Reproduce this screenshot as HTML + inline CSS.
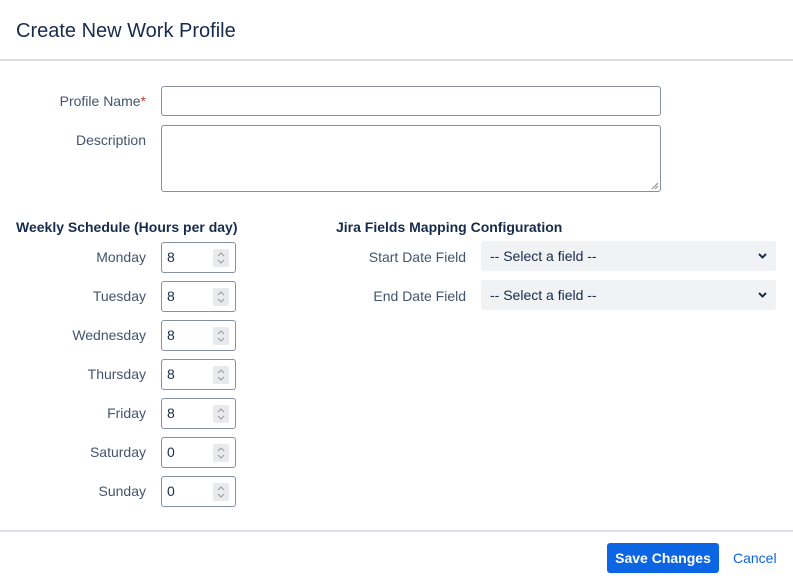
<!DOCTYPE html>
<html><head><style>
*{box-sizing:border-box;margin:0;padding:0}
body{width:793px;height:580px;background:#fff;font-family:"Liberation Sans","DejaVu Sans",sans-serif;color:#44546f;position:relative;overflow:hidden;font-size:14px}
.abs{position:absolute}
h1{position:absolute;left:16px;top:20px;font-size:20px;font-weight:normal;color:#172b4d}
.hr{position:absolute;left:0;width:793px;height:2px;background:#dcdfe4}
.lbl{position:absolute;text-align:right;font-size:14px;color:#44546f}
.inp{position:absolute;border:1px solid #8590a2;border-radius:3px;background:#fff}
.num{position:absolute;left:161px;width:75px;height:31px;border:1px solid #8590a2;border-radius:3px;font-size:14px;color:#172b4d;padding:6px 0 0 5px}
.spin{position:absolute;right:6px;top:6px;width:16px;height:18px;background:#e9eaee;border-radius:2px}
.sel{position:absolute;left:481px;width:295px;height:30px;background:#f1f2f4;border-radius:3px;font-size:14px;color:#172b4d;padding:7px 0 0 9px}
h3{position:absolute;font-size:14px;font-weight:bold;color:#172b4d}
</style></head><body>
<h1>Create New Work Profile</h1>
<div class="hr" style="top:59px"></div>
<div class="lbl" style="left:0;width:146px;top:93px">Profile Name<span style="color:#c9372c">*</span></div>
<div class="inp" style="left:161px;top:86px;width:500px;height:30px"></div>
<div class="lbl" style="left:0;width:146px;top:132px">Description</div>
<div class="inp" style="left:161px;top:125px;width:500px;height:67px"><svg class="abs" style="right:1px;bottom:1px" width="9" height="9"><path d="M8 2L2 8M8 5L5 8" stroke="#888" stroke-width="1"/></svg></div>
<h3 style="left:16px;top:219px">Weekly Schedule (Hours per day)</h3>
<h3 style="left:336px;top:219px">Jira Fields Mapping Configuration</h3>

<div class="lbl" style="left:0;width:146px;top:249px">Monday</div>
<div class="num" style="top:242px">8<div class="spin"><svg width="16" height="18"><path d="M5 7l3-3 3 3M5 11l3 3 3-3" fill="none" stroke="#999" stroke-width="1"/></svg></div></div>
<div class="lbl" style="left:0;width:146px;top:288px">Tuesday</div>
<div class="num" style="top:281px">8<div class="spin"><svg width="16" height="18"><path d="M5 7l3-3 3 3M5 11l3 3 3-3" fill="none" stroke="#999" stroke-width="1"/></svg></div></div>
<div class="lbl" style="left:0;width:146px;top:327px">Wednesday</div>
<div class="num" style="top:320px">8<div class="spin"><svg width="16" height="18"><path d="M5 7l3-3 3 3M5 11l3 3 3-3" fill="none" stroke="#999" stroke-width="1"/></svg></div></div>
<div class="lbl" style="left:0;width:146px;top:366px">Thursday</div>
<div class="num" style="top:359px">8<div class="spin"><svg width="16" height="18"><path d="M5 7l3-3 3 3M5 11l3 3 3-3" fill="none" stroke="#999" stroke-width="1"/></svg></div></div>
<div class="lbl" style="left:0;width:146px;top:405px">Friday</div>
<div class="num" style="top:398px">8<div class="spin"><svg width="16" height="18"><path d="M5 7l3-3 3 3M5 11l3 3 3-3" fill="none" stroke="#999" stroke-width="1"/></svg></div></div>
<div class="lbl" style="left:0;width:146px;top:444px">Saturday</div>
<div class="num" style="top:437px">0<div class="spin"><svg width="16" height="18"><path d="M5 7l3-3 3 3M5 11l3 3 3-3" fill="none" stroke="#999" stroke-width="1"/></svg></div></div>
<div class="lbl" style="left:0;width:146px;top:483px">Sunday</div>
<div class="num" style="top:476px">0<div class="spin"><svg width="16" height="18"><path d="M5 7l3-3 3 3M5 11l3 3 3-3" fill="none" stroke="#999" stroke-width="1"/></svg></div></div>

<div class="lbl" style="left:300px;width:166px;top:249px">Start Date Field</div>
<div class="sel" style="top:241px">-- Select a field --<svg class="abs" style="right:9px;top:12px" width="9" height="6"><path d="M1 1l3.5 3.5L8 1" fill="none" stroke="#172b4d" stroke-width="2"/></svg></div>
<div class="lbl" style="left:300px;width:166px;top:288px">End Date Field</div>
<div class="sel" style="top:280px">-- Select a field --<svg class="abs" style="right:9px;top:12px" width="9" height="6"><path d="M1 1l3.5 3.5L8 1" fill="none" stroke="#172b4d" stroke-width="2"/></svg></div>

<div class="hr" style="top:530px"></div>
<div class="abs" style="left:607px;top:543px;width:112px;height:30px;background:#0c66e4;border-radius:3px;color:#fff;font-weight:bold;font-size:14px;text-align:center;line-height:30px">Save Changes</div>
<div class="abs" style="left:733px;top:550px;color:#0c66e4;font-size:14px">Cancel</div>
</body></html>
